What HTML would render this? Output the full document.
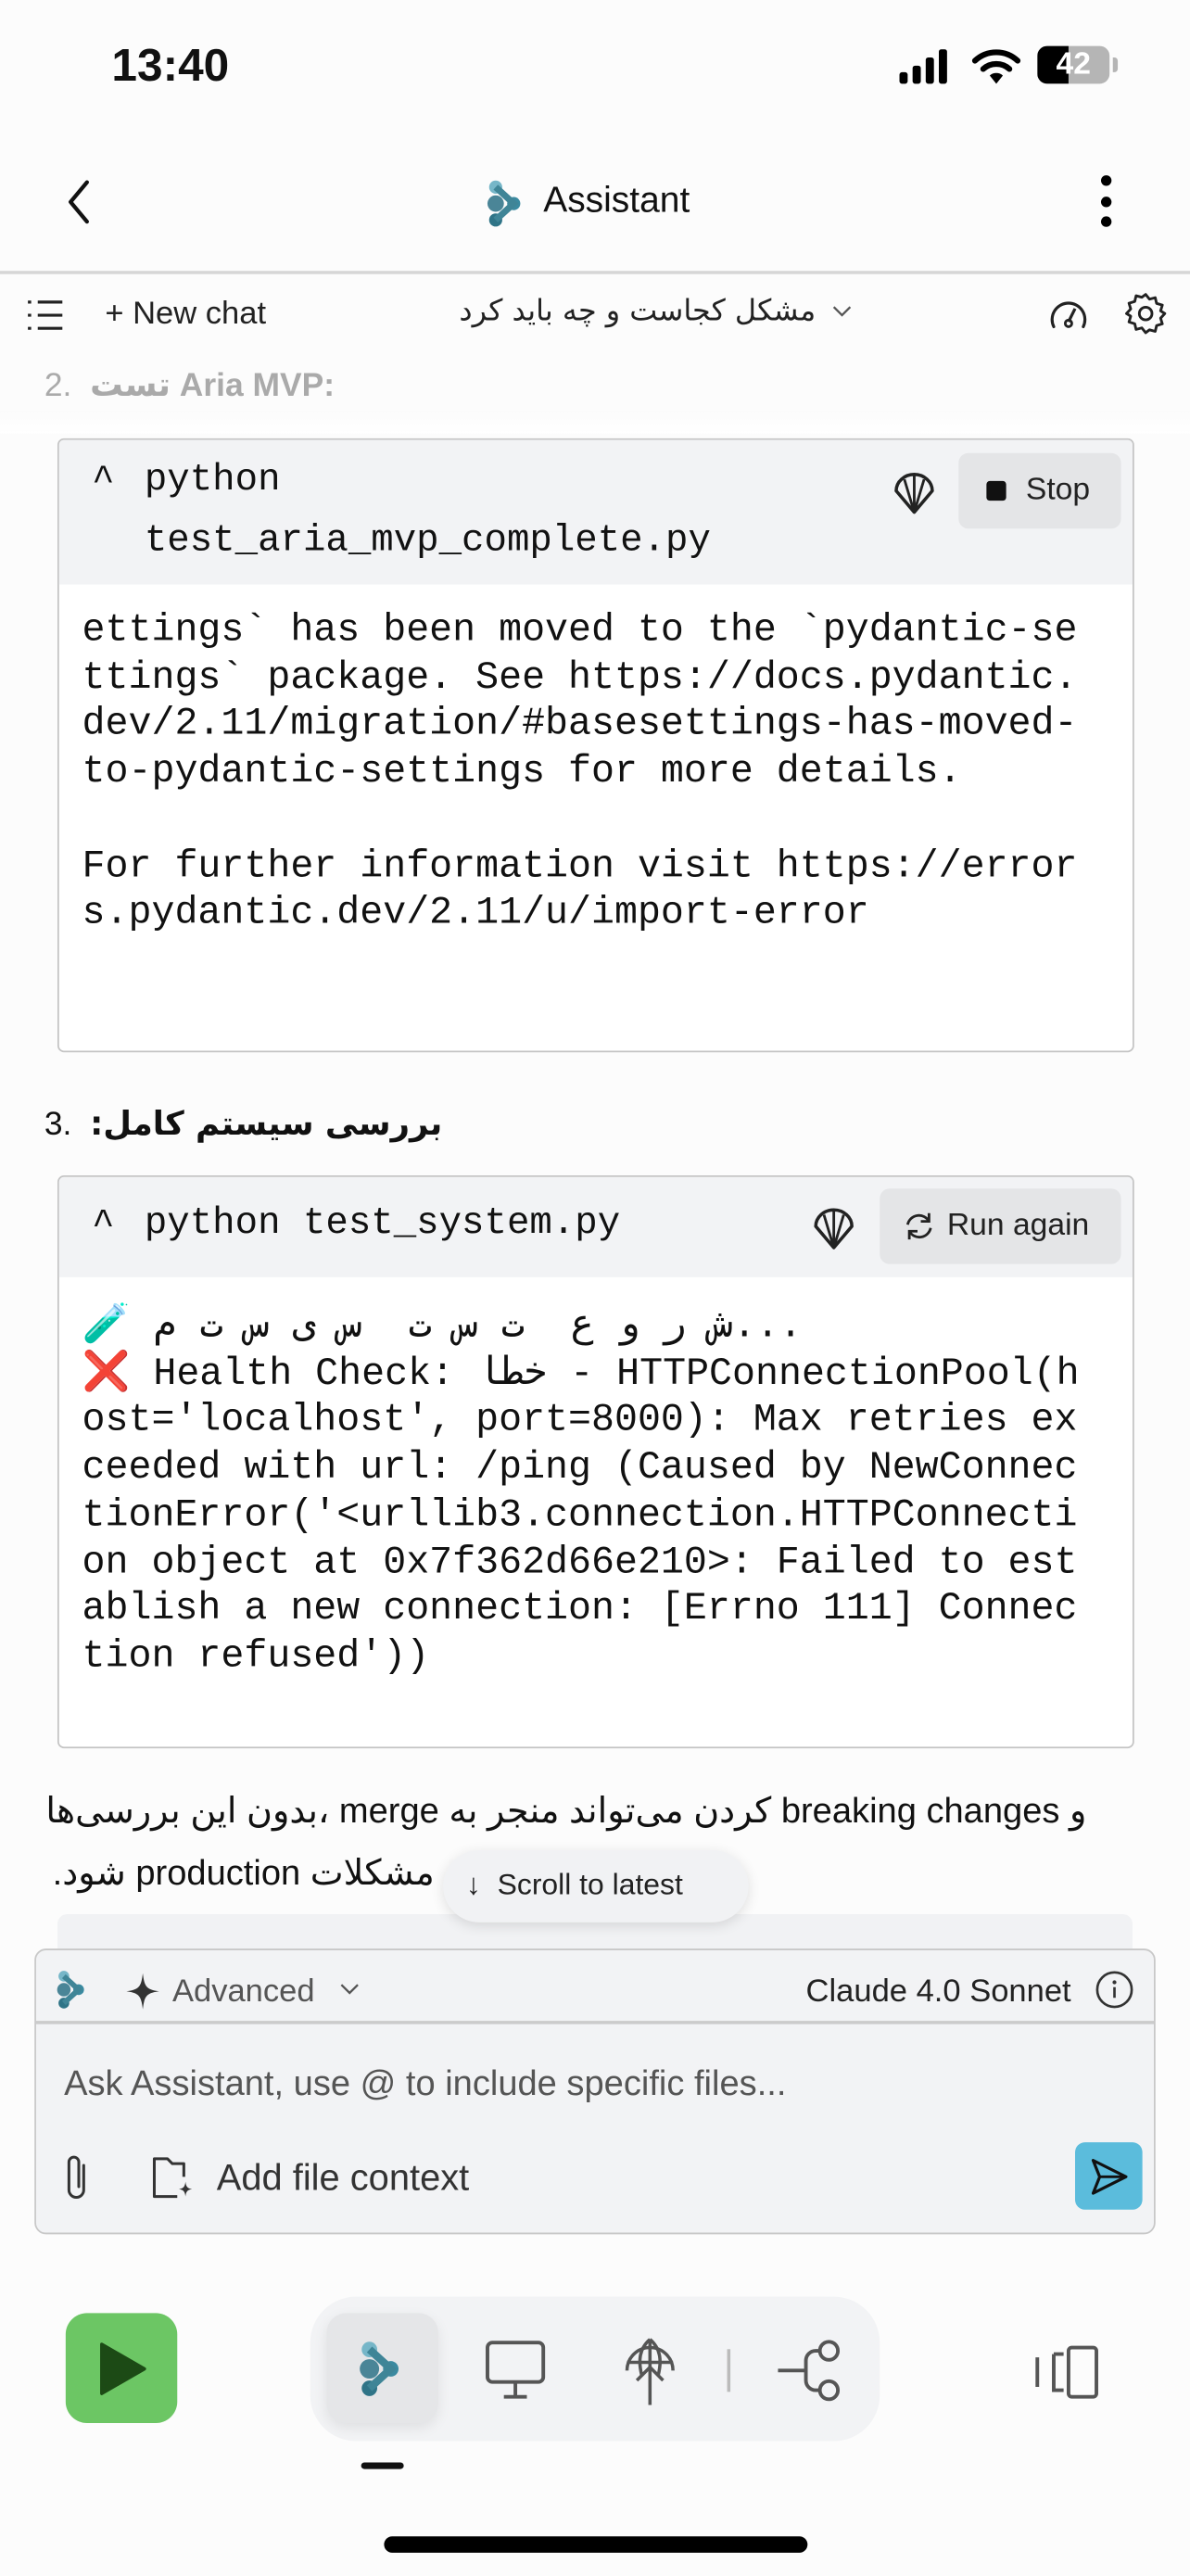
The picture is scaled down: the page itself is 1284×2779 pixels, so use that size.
<!DOCTYPE html>
<html><head><meta charset="utf-8"><style>
html,body{margin:0;padding:0;background:#fcfcfc;}
body{width:1284px;height:2778px;overflow:hidden;position:relative;}
#w{position:absolute;left:0;top:0;width:725px;height:1569px;transform:scale(1.771);transform-origin:0 0;font-family:"Liberation Sans","Noto Sans CJK SC",sans-serif;color:#111;}
.a{position:absolute;white-space:nowrap;}
.mono{font-family:"Liberation Mono","DejaVu Sans Mono","Noto Sans CJK SC",monospace;}
.code{position:absolute;left:35px;width:654px;border:1px solid #c4c4c4;border-radius:4px;background:#fff;overflow:hidden;}
.code .hd{position:absolute;left:0;top:0;right:0;background:#f2f3f5;}
.code pre{position:absolute;left:14px;margin:0;font-family:"Liberation Mono","DejaVu Sans Mono","Noto Sans CJK SC",monospace;font-size:23.5px;line-height:28.7px;color:#111;}
.btn{position:absolute;background:#e4e5e7;border-radius:6px;font-size:19px;color:#222;}
</style></head><body><div id="w">
<div class="a" style="left:68px;top:24px;font-size:28px;font-weight:bold;">13:40</div>
<svg class="a" style="left:548px;top:30px" width="36" height="22"><rect x="0" y="14" width="5" height="7" rx="1.5"/><rect x="8" y="10" width="5" height="11" rx="1.5"/><rect x="16" y="5" width="5" height="16" rx="1.5"/><rect x="24" y="0" width="5" height="21" rx="1.5"/></svg>
<svg class="a" style="left:592px;top:28px" width="30" height="24" viewBox="0 0 30 24"><path d="M2 9a19 19 0 0 1 26 0" stroke="#000" stroke-width="3.5" fill="none" stroke-linecap="round"/><path d="M7 14a12 12 0 0 1 16 0" stroke="#000" stroke-width="3.5" fill="none" stroke-linecap="round"/><path d="M11 18l4 5 4-5a6 6 0 0 0-8 0z"/></svg>
<div class="a" style="left:632px;top:28px;width:44px;height:23px;border-radius:6px;background:#b5b5b5;overflow:hidden"><div style="position:absolute;left:0;top:0;width:19px;height:23px;background:#000"></div><div style="position:absolute;left:0;top:0;width:44px;text-align:center;font-weight:bold;font-size:19px;line-height:23px;color:#fff">42</div></div>
<div class="a" style="left:678px;top:35px;width:3px;height:9px;background:#b5b5b5;border-radius:0 2px 2px 0"></div>
<svg class="a" style="left:36px;top:108px" width="22" height="30"><path d="M17 3L7 15l10 12" stroke="#111" stroke-width="2.4" fill="none" stroke-linecap="round" stroke-linejoin="round"/></svg>
<svg class="a" style="left:296px;top:108px" width="22" height="32" viewBox="0 0 22 32"><circle cx="6" cy="6" r="4" fill="#76b6c8"/><circle cx="6" cy="16" r="5" fill="#4a8597"/><circle cx="17" cy="16" r="4" fill="#3b8aa0"/><circle cx="6" cy="26" r="4" fill="#2f7487"/><path d="M6 6L17 16L6 26" stroke="#3f8597" stroke-width="4" fill="none"/></svg>
<div class="a" style="left:331px;top:109px;font-size:22px;font-weight:500;">Assistant</div>
<svg class="a" style="left:668px;top:106px" width="12" height="34"><circle cx="6" cy="4" r="3.2"/><circle cx="6" cy="17" r="3.2"/><circle cx="6" cy="29" r="3.2"/></svg>
<div class="a" style="left:0;top:165px;width:725px;height:2px;background:#d6d6d6"></div>
<svg class="a" style="left:16px;top:181px" width="24" height="22"><g stroke="#222" stroke-width="1.8"><line x1="1" y1="3" x2="3" y2="3"/><line x1="7" y1="3" x2="22" y2="3"/><line x1="1" y1="11" x2="3" y2="11"/><line x1="7" y1="11" x2="22" y2="11"/><line x1="1" y1="19" x2="3" y2="19"/><line x1="7" y1="19" x2="22" y2="19"/></g></svg>
<div class="a" style="left:64px;top:180px;font-size:19.5px;color:#222;">+ New chat</div>
<div class="a" style="right:228px;top:179px;font-size:18px;color:#222;direction:rtl;font-family:'DejaVu Sans',sans-serif;">مشکل کجاست و چه باید کرد</div>
<svg class="a" style="left:506px;top:185px" width="14" height="10"><path d="M2 2l5 5 5-5" stroke="#555" stroke-width="1.3" fill="none"/></svg>
<svg class="a" style="left:637px;top:178px" width="28" height="26"><path d="M5 21A10 10 0 1 1 23 21" stroke="#222" stroke-width="1.8" fill="none" stroke-linecap="round"/><path d="M14 18l4-8" stroke="#222" stroke-width="1.8"/><circle cx="14" cy="19" r="2" fill="none" stroke="#222" stroke-width="1.6"/></svg>
<svg class="a" style="left:684px;top:177px" width="28" height="28" viewBox="0 0 24 24"><path d="M12 2l2 2.5 3-.8.7 3 3 .9-.9 3L22 12l-2.2 2.4.9 3-3 .9-.7 3-3-.8L12 22l-2-2.5-3 .8-.7-3-3-.9.9-3L2 12l2.2-2.4-.9-3 3-.9.7-3 3 .8z" fill="none" stroke="#222" stroke-width="1.4" stroke-linejoin="round"/><circle cx="12" cy="12" r="3.3" fill="none" stroke="#222" stroke-width="1.4"/></svg>
<div class="a" style="left:27px;top:222px;font-size:20px;color:#aaa;font-weight:bold;"><span style="font-weight:normal">2.</span>&nbsp; <span style="font-family:'DejaVu Sans',sans-serif">تست</span> Aria MVP:</div>
<div class="a" style="left:0;top:250px;width:725px;height:14px;background:linear-gradient(#fbfbfb,#fff)"></div>
<div class="code" style="top:267px;height:372px;">
 <div class="hd" style="height:88px"></div>
 <div class="a mono" style="left:20px;top:12px;font-size:23px;">^</div>
 <div class="a mono" style="left:52px;top:11px;font-size:23px;">python</div>
 <div class="a mono" style="left:52px;top:48px;font-size:23px;">test_aria_mvp_complete.py</div>
 <svg class="a" style="left:507px;top:17px" width="28" height="30" viewBox="0 0 28 30"><path d="M14 27L3 14a11 10 0 0 1 22 0z" fill="none" stroke="#222" stroke-width="2" stroke-linejoin="round"/><path d="M14 27L8 7M14 27V4M14 27L20 7" stroke="#222" stroke-width="1.6" fill="none"/></svg>
 <div class="btn" style="left:548px;top:8px;width:99px;height:46px;"><div class="a" style="left:17px;top:17px;width:12px;height:12px;background:#111;border-radius:2px"></div><div class="a" style="left:41px;top:12px;">Stop</div></div>
 <pre style="top:103px">ettings` has been moved to the `pydantic-se
ttings` package. See https://docs.pydantic.
dev/2.11/migration/#basesettings-has-moved-
to-pydantic-settings for more details.

For further information visit https://error
s.pydantic.dev/2.11/u/import-error</pre>
</div>
<div class="a" style="left:27px;top:672px;font-size:20px;"><span>3.</span>&nbsp; <b style="font-family:'DejaVu Sans',sans-serif;direction:rtl;unicode-bidi:embed">بررسی سیستم کامل:</b></div>
<div class="code" style="top:716px;height:347px;">
 <div class="hd" style="height:61px"></div>
 <div class="a mono" style="left:20px;top:16px;font-size:23px;">^</div>
 <div class="a mono" style="left:52px;top:15px;font-size:23px;">python test_system.py</div>
 <svg class="a" style="left:458px;top:16px" width="28" height="30" viewBox="0 0 28 30"><path d="M14 27L3 14a11 10 0 0 1 22 0z" fill="none" stroke="#222" stroke-width="2" stroke-linejoin="round"/><path d="M14 27L8 7M14 27V4M14 27L20 7" stroke="#222" stroke-width="1.6" fill="none"/></svg>
 <div class="btn" style="left:500px;top:7px;width:147px;height:46px;"><svg class="a" style="left:14px;top:13px" width="20" height="20" viewBox="0 0 20 20"><path d="M16 7A7 7 0 0 0 3 9M4 13a7 7 0 0 0 13-2" stroke="#222" stroke-width="1.6" fill="none"/><path d="M16 2v5h-5M4 18v-5h5" stroke="#222" stroke-width="1.6" fill="none"/></svg><div class="a" style="left:41px;top:12px;">Run again</div></div>
 <pre style="top:78px"><span style="color:#3a3">🧪</span> ش ر و ع  ت س ت  س ی س ت م...
<span style="color:#d22;font-weight:bold">❌</span> Health Check: خطا - HTTPConnectionPool(h
ost='localhost', port=8000): Max retries ex
ceeded with url: /ping (Caused by NewConnec
tionError('&lt;urllib3.connection.HTTPConnecti
on object at 0x7f362d66e210&gt;: Failed to est
ablish a new connection: [Errno 111] Connec
tion refused'))</pre>
</div>
<div class="a" style="right:63px;top:1084px;font-size:21.5px;line-height:38px;direction:rtl;font-family:'Liberation Sans','DejaVu Sans',sans-serif;">و breaking changes کردن می‌تواند منجر به merge ،بدون این بررسی‌ها</div>
<div class="a" style="left:32px;top:1122px;font-size:21.5px;line-height:38px;font-family:'Liberation Sans','DejaVu Sans',sans-serif;direction:rtl;">مشکلات production شود.</div>
<div class="a" style="left:35px;top:1166px;width:655px;height:24px;background:#f1f2f4;border-radius:6px 6px 0 0"></div>
<div class="a" style="left:270px;top:1127px;width:186px;height:44px;border-radius:22px;background:#f1f2f4;box-shadow:0 2px 8px rgba(0,0,0,.12);"><div class="a" style="left:14px;top:11px;font-size:18px;color:#222">↓&nbsp; Scroll to latest</div></div>
<div class="a" style="left:21px;top:1187px;width:681px;height:172px;background:#f2f3f5;border:1.5px solid #c8c8c8;border-radius:7px;">
 <svg class="a" style="left:12px;top:10px" width="18" height="28" viewBox="0 0 22 32"><circle cx="6" cy="6" r="4" fill="#76b6c8"/><circle cx="6" cy="16" r="5" fill="#4a8597"/><circle cx="17" cy="16" r="4" fill="#3b8aa0"/><circle cx="6" cy="26" r="4" fill="#2f7487"/><path d="M6 6L17 16L6 26" stroke="#3f8597" stroke-width="4" fill="none"/></svg>
 <svg class="a" style="left:55px;top:14px" width="20" height="22" viewBox="0 0 20 22"><path d="M10 0C11 8 12 10 20 11C12 12 11 14 10 22C9 14 8 12 0 11C8 10 9 8 10 0z" fill="#333"/></svg>
 <div class="a" style="left:83px;top:14px;font-size:19.5px;color:#555">Advanced</div>
 <svg class="a" style="left:184px;top:19px" width="14" height="10"><path d="M2 2l5 5 5-5" stroke="#555" stroke-width="1.3" fill="none"/></svg>
 <div class="a" style="left:469px;top:14px;font-size:19.5px;color:#222">Claude 4.0 Sonnet</div>
 <svg class="a" style="left:645px;top:12px" width="24" height="24"><circle cx="12" cy="12" r="10.5" fill="none" stroke="#333" stroke-width="1.5"/><circle cx="12" cy="7.5" r="1.2" fill="#333"/><line x1="12" y1="10.5" x2="12" y2="17" stroke="#333" stroke-width="1.5"/></svg>
 <div class="a" style="left:0;top:43px;width:681px;height:2px;background:#cbcbcb"></div>
 <div class="a" style="left:17px;top:69px;font-size:21.5px;color:#555">Ask Assistant, use @ to include specific files...</div>
 <svg class="a" style="left:16px;top:123px" width="18" height="32" viewBox="0 0 18 32"><path d="M13 8v15a4.5 4.5 0 0 1-9 0V6a3 3 0 0 1 6 0v15" fill="none" stroke="#333" stroke-width="1.7" stroke-linecap="round"/></svg>
 <svg class="a" style="left:70px;top:125px" width="28" height="28" viewBox="0 0 28 28"><path d="M16 25H2V2h8l3 3h7v8" fill="none" stroke="#333" stroke-width="1.7" stroke-linejoin="round"/><path d="M21 16c.4 3 1 4 4 4.5-3 .5-3.6 1.5-4 4.5-.4-3-1-4-4-4.5 3-.5 3.6-1.5 4-4.5z" fill="#333"/></svg>
 <div class="a" style="left:110px;top:126px;font-size:22.5px;color:#333">Add file context</div>
 <div class="a" style="left:633px;top:117px;width:41px;height:41px;background:#5bbcdc;border-radius:6px;"><svg class="a" style="left:9px;top:9px" width="24" height="24" viewBox="0 0 24 24"><path d="M2 2L22 12L2 22L6 12z" fill="none" stroke="#111" stroke-width="1.8" stroke-linejoin="round"/><line x1="6" y1="12" x2="22" y2="12" stroke="#111" stroke-width="1.6"/></svg></div>
</div>
<div class="a" style="left:40px;top:1409px;width:68px;height:67px;background:#6cc664;border-radius:13px;"><svg class="a" style="left:20px;top:17px" width="30" height="34"><path d="M2 2L28 17L2 32z" fill="#1c4a15" stroke="#1c4a15" stroke-width="2" stroke-linejoin="round"/></svg></div>
<div class="a" style="left:189px;top:1399px;width:347px;height:88px;background:#f2f3f5;border-radius:28px;"></div>
<div class="a" style="left:199px;top:1409px;width:68px;height:67px;background:#e5e6e8;border-radius:12px;box-shadow:0 3px 8px rgba(0,0,0,.08)"></div>
<svg class="a" style="left:218px;top:1423px" width="26" height="40" viewBox="0 0 22 32"><circle cx="6" cy="6" r="4" fill="#76b6c8"/><circle cx="6" cy="16" r="5" fill="#4a8597"/><circle cx="17" cy="16" r="4" fill="#3b8aa0"/><circle cx="6" cy="26" r="4" fill="#2f7487"/><path d="M6 6L17 16L6 26" stroke="#3f8597" stroke-width="4" fill="none"/></svg>
<svg class="a" style="left:295px;top:1425px" width="38" height="38" viewBox="0 0 38 38"><rect x="2" y="2" width="34" height="24" rx="3" fill="none" stroke="#555" stroke-width="2.2"/><path d="M19 26v8M12 35h14" stroke="#555" stroke-width="2.2"/></svg>
<svg class="a" style="left:379px;top:1422px" width="34" height="44" viewBox="0 0 34 44"><path d="M3 22A14 14 0 1 1 31 22" fill="none" stroke="#555" stroke-width="2"/><path d="M3 17h28M17 3v40M17 3c-7 6-7 14-5 22M17 3c7 6 7 14 5 22" fill="none" stroke="#555" stroke-width="2"/><path d="M9 28l8-8 8 8" fill="none" stroke="#555" stroke-width="2"/></svg>
<div class="a" style="left:443px;top:1431px;width:1.5px;height:26px;background:#bbb"></div>
<svg class="a" style="left:472px;top:1424px" width="42" height="40" viewBox="0 0 42 40"><circle cx="33" cy="8" r="5.5" fill="none" stroke="#555" stroke-width="2.2"/><circle cx="33" cy="32" r="5.5" fill="none" stroke="#555" stroke-width="2.2"/><path d="M2 20h16M27 8h-2a6 6 0 0 0-6 6v12a6 6 0 0 0 6 6h2" fill="none" stroke="#555" stroke-width="2.2"/></svg>
<svg class="a" style="left:630px;top:1428px" width="40" height="34" viewBox="0 0 40 34"><path d="M2 8v18M12 6v22h6M12 6h6" fill="none" stroke="#555" stroke-width="2.2"/><rect x="21" y="2" width="17" height="30" rx="2" fill="none" stroke="#555" stroke-width="2.2"/></svg>
<div class="a" style="left:220px;top:1500px;width:26px;height:4px;background:#111;border-radius:2px"></div>
<div class="a" style="left:234px;top:1545px;width:258px;height:10px;background:#000;border-radius:5px"></div>
</div></body></html>
